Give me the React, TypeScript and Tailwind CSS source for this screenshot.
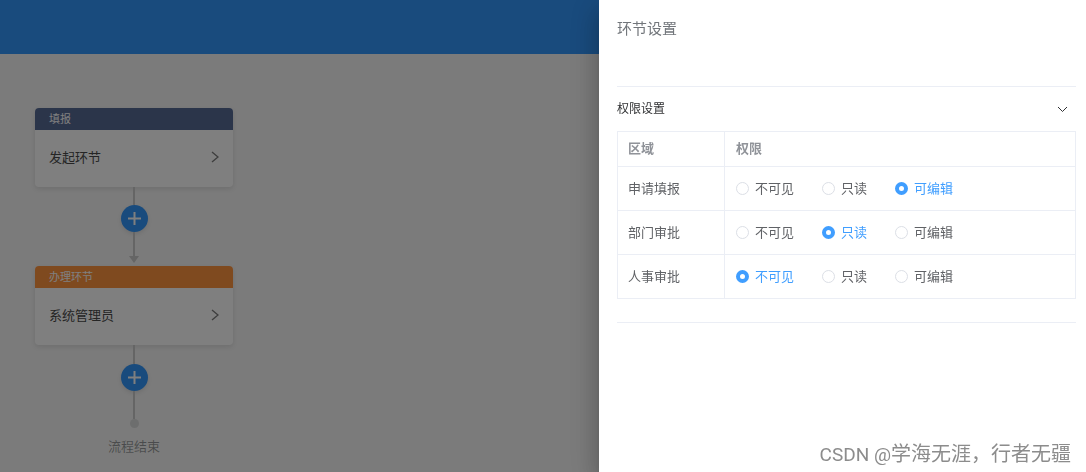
import { useState } from "react";

const PERMISSIONS = ["不可见", "只读", "可编辑"];

const AREAS = [
  { id: "apply", name: "申请填报", value: "可编辑" },
  { id: "dept", name: "部门审批", value: "只读" },
  { id: "hr", name: "人事审批", value: "不可见" },
];

interface NodeCardProps {
  type: string;
  title: string;
  headClass: string;
}

function NodeCard({ type, title, headClass }: NodeCardProps) {
  return (
    <button type="button" className="block w-[198px] overflow-hidden rounded bg-white text-left shadow-[0_2px_5px_rgba(0,0,0,0.1)]">
      <span className={`flex h-[22px] items-center px-3.5 pb-0.5 text-[11px] leading-4 text-white ${headClass}`}>{type}</span>
      <span className="flex h-[57px] items-center justify-between px-3.5 pb-[3px] text-[13px] leading-5 text-[#4a4a4a]">
        {title}
        <svg width="8" height="12" viewBox="0 0 8 12" fill="none" stroke="#7c7c7c" strokeWidth="1.4">
          <path d="M1 1l6 5-6 5" />
        </svg>
      </span>
    </button>
  );
}

function AddButton() {
  return (
    <button
      type="button"
      aria-label="添加环节"
      className="flex size-[27px] items-center justify-center rounded-full bg-[#3296fa] shadow-[0_2px_4px_rgba(0,0,0,0.1)]"
    >
      <svg width="13" height="13" viewBox="0 0 13 13" stroke="#fff" strokeWidth="2">
        <path d="M6.5 0v13M0 6.5h13" />
      </svg>
    </button>
  );
}

function Flow() {
  return (
    <div className="flex w-[198px] flex-col items-center">
      <NodeCard type="填报" title="发起环节" headClass="bg-[#576a95]" />
      <div className="h-[18px] w-0.5 bg-[#cacaca]" />
      <AddButton />
      <div className="h-6 w-0.5 bg-[#cacaca]" />
      <svg className="mb-[3px]" width="10" height="7" viewBox="0 0 10 7" fill="#cacaca">
        <path d="M0 0h10L5 7z" />
      </svg>
      <NodeCard type="办理环节" title="系统管理员" headClass="bg-[#ff943e]" />
      <div className="h-[19px] w-0.5 bg-[#cacaca]" />
      <AddButton />
      <div className="h-7 w-0.5 bg-[#cacaca]" />
      <div className="size-[9px] rounded-full bg-[#dbdcdc]" />
      <p className="mt-2 text-[13px] leading-5 text-[#191f25]/45">流程结束</p>
    </div>
  );
}

function PermissionTable() {
  const [values, setValues] = useState<Record<string, string>>(
    Object.fromEntries(AREAS.map((a) => [a.id, a.value]))
  );

  return (
    <table className="w-full table-fixed border-collapse border border-[#ebeef5] text-[13px] leading-5 text-[#606266]">
      <thead>
        <tr className="h-[35px] text-left text-[#909399]">
          <th className="w-[107px] border border-[#ebeef5] px-2.5 pb-0.5 font-bold">区域</th>
          <th className="border border-[#ebeef5] px-[11px] pb-0.5 font-bold">权限</th>
        </tr>
      </thead>
      <tbody>
        {AREAS.map((area) => (
          <tr key={area.id} className="h-11">
            <td className="border border-[#ebeef5] px-2.5 pb-0.5">{area.name}</td>
            <td className="border border-[#ebeef5] px-[11px]">
              <div className="flex items-center gap-7">
                {PERMISSIONS.map((p) => (
                  <label key={p} className="flex cursor-pointer items-center gap-1.5 has-checked:text-[#409eff]">
                    <input
                      type="radio"
                      name={area.id}
                      checked={values[area.id] === p}
                      onChange={() => setValues({ ...values, [area.id]: p })}
                      className="size-[13px] appearance-none rounded-full border border-[#dcdfe6] bg-white checked:border-4 checked:border-[#409eff]"
                    />
                    <span className="pb-0.5">{p}</span>
                  </label>
                ))}
              </div>
            </td>
          </tr>
        ))}
      </tbody>
    </table>
  );
}

function SettingsDrawer() {
  const [open, setOpen] = useState(true);

  return (
    <aside className="w-[487px] max-w-full bg-white pr-2.5 pl-[18px] shadow-[0_8px_10px_-5px_rgba(0,0,0,0.2),0_16px_24px_2px_rgba(0,0,0,0.14),0_6px_30px_5px_rgba(0,0,0,0.12)]">
      <h2 className="pt-[18px] pb-12 text-[15px] leading-5 text-[#72767b]">环节设置</h2>
      <section className="border-y border-[#ebeef5]">
        <button
          type="button"
          aria-expanded={open}
          onClick={() => setOpen(!open)}
          className="flex h-11 w-full items-center justify-between pr-2 text-[12px] text-[#303133]"
        >
          <span className="pb-0.5">权限设置</span>
          <svg width="11" height="7" viewBox="0 0 11 7" fill="none" stroke="#303133" strokeWidth="1">
            <path d="M1 1l4.5 4.5L10 1" />
          </svg>
        </button>
        {open && (
          <div className="pb-[23px]">
            <PermissionTable />
          </div>
        )}
      </section>
    </aside>
  );
}

export default function App() {
  return (
    <div className="min-h-screen bg-[#f6f6f6] font-['Noto_Sans_CJK_SC',sans-serif]">
      <header className="h-[54px] bg-[#3296fa]" />
      <main className="px-[35px] pt-[54px]">
        <Flow />
      </main>
      <div className="fixed inset-0 flex justify-end overflow-hidden bg-black/50">
        <SettingsDrawer />
      </div>
      <p className="fixed right-[15px] bottom-[3px] text-[20px] leading-7 text-[#8c8c8c]">
        <span className="font-['Roboto',sans-serif] text-[19px]">CSDN @</span>学海无涯，行者无疆
      </p>
    </div>
  );
}
